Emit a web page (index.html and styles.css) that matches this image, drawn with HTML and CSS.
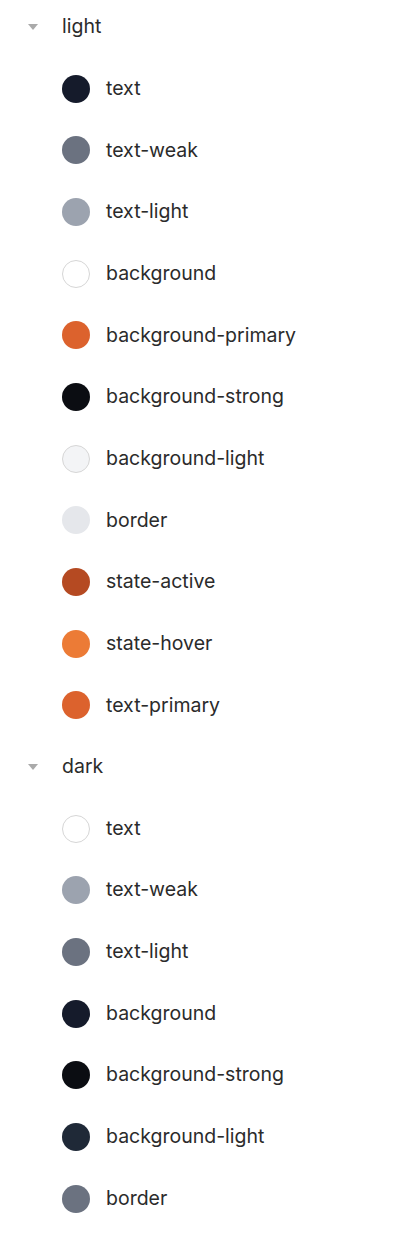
FILE: index.html
```html
<!DOCTYPE html>
<html lang="en">
<head>
    <meta charset="UTF-8">
    <meta name="viewport" content="width=device-width, initial-scale=1.0">
    <title>Theme colors</title>
    <link rel="stylesheet" href="styles.css">
</head>
<body>
    <div class="tree">
        <div class="group">
            <div class="group-head">
                <span class="caret"></span>
                <span class="group-name">light</span>
            </div>
            <div class="swatch"><span class="dot" style="background:#151b2b"></span><span class="label">text</span></div>
            <div class="swatch"><span class="dot" style="background:#6b7280"></span><span class="label">text-weak</span></div>
            <div class="swatch"><span class="dot" style="background:#9ca3af"></span><span class="label">text-light</span></div>
            <div class="swatch"><span class="dot outlined" style="background:#ffffff"></span><span class="label">background</span></div>
            <div class="swatch"><span class="dot" style="background:#dc622d"></span><span class="label">background-primary</span></div>
            <div class="swatch"><span class="dot" style="background:#0b0d12"></span><span class="label">background-strong</span></div>
            <div class="swatch"><span class="dot outlined" style="background:#f3f4f6"></span><span class="label">background-light</span></div>
            <div class="swatch"><span class="dot" style="background:#e5e7eb"></span><span class="label">border</span></div>
            <div class="swatch"><span class="dot" style="background:#b54a22"></span><span class="label">state-active</span></div>
            <div class="swatch"><span class="dot" style="background:#ec7b36"></span><span class="label">state-hover</span></div>
            <div class="swatch"><span class="dot" style="background:#dc622d"></span><span class="label">text-primary</span></div>
        </div>
        <div class="group">
            <div class="group-head">
                <span class="caret"></span>
                <span class="group-name">dark</span>
            </div>
            <div class="swatch"><span class="dot outlined" style="background:#ffffff"></span><span class="label">text</span></div>
            <div class="swatch"><span class="dot" style="background:#9ca3af"></span><span class="label">text-weak</span></div>
            <div class="swatch"><span class="dot" style="background:#6b7280"></span><span class="label">text-light</span></div>
            <div class="swatch"><span class="dot" style="background:#151b2b"></span><span class="label">background</span></div>
            <div class="swatch"><span class="dot" style="background:#0b0d12"></span><span class="label">background-strong</span></div>
            <div class="swatch"><span class="dot" style="background:#1f2937"></span><span class="label">background-light</span></div>
            <div class="swatch"><span class="dot" style="background:#6b7280"></span><span class="label">border</span></div>
        </div>
    </div>
</body>
</html>
```

FILE: styles.css
```css
body {
    margin: 0;
    padding: 0;
    background: #ffffff;
    font-family: Inter, "Noto Sans", sans-serif;
    color: #2b2b2b;
}
.tree {
    margin-top: -3.8px;
}
.group-head,
.swatch {
    display: flex;
    align-items: center;
    height: 61.67px;
}
.group-head {
    padding-left: 28px;
}
.caret {
    width: 0;
    height: 0;
    border-left: 5px solid transparent;
    border-right: 5px solid transparent;
    border-top: 6px solid #aaaaaa;
    margin-right: 24px;
}
.group-name,
.label {
    font-size: 19.5px;
    line-height: 1;
}
.swatch {
    padding-left: 62px;
}
.dot {
    width: 28px;
    height: 28px;
    border-radius: 50%;
    box-sizing: border-box;
    margin-right: 16px;
    flex-shrink: 0;
}
.dot.outlined {
    border: 1px solid #d6d6d6;
}
```
